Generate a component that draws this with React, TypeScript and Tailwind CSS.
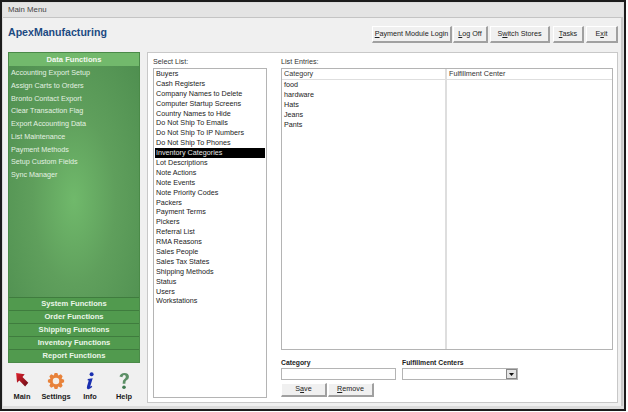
const items = ["Buyers","Cash Registers","Company Names to Delete","Computer Startup Screens","Country Names to Hide","Do Not Ship To Emails","Do Not Ship To IP Numbers","Do Not Ship To Phones","Inventory Categories","Lot Descriptions","Note Actions","Note Events","Note Priority Codes","Packers","Payment Terms","Pickers","Referral List","RMA Reasons","Sales People","Sales Tax States","Shipping Methods","Status","Users","Workstations"];
const data = ["Accounting Export Setup","Assign Carts to Orders","Bronto Contact Export","Clear Transaction Flag","Export Accounting Data","List Maintenance","Payment Methods","Setup Custom Fields","Sync Manager"];
const sections = ["System Functions","Order Functions","Shipping Functions","Inventory Functions","Report Functions"];
const entries = ["food","hardware","Hats","Jeans","Pants"];

function Btn({ pre, u, post, w }: { pre: string; u: string; post: string; w: string }) {
  return (
    <button className={`${w} flex items-center justify-center bg-[#f0f0f0] border-t border-l border-t-white border-l-white border-b-2 border-r-2 border-b-[#a0a0a0] border-r-[#a0a0a0] text-[7.2px] text-[#222] whitespace-nowrap`}>
      <span>{pre}<span className="underline">{u}</span>{post}</span>
    </button>
  );
}

function Tool({ label, children }: { label: string; children: React.ReactNode }) {
  return (
    <div className="w-[28px] flex flex-col items-center gap-[2px]">
      <svg width="18" height="18" viewBox="0 0 20 20">{children}</svg>
      <span className="text-[7.4px] font-bold text-[#1a1a1a] leading-[10px] whitespace-nowrap">{label}</span>
    </div>
  );
}

export default function App() {
  return (
    <div className="w-[628px] h-[412px] bg-white overflow-hidden transform-gpu" style={{ fontFamily: '"Liberation Sans", Arial, sans-serif' }}>
      <div className="w-[626px] h-[411px] border-2 border-[#1c1c1c] bg-[#dcdcdc] flex flex-col p-px">
        <div className="h-[15px] shrink-0 bg-[#e4e4e4] border-b border-[#c4c4c4] flex items-center pl-[5px] text-[7.8px] text-[#444]">Main Menu</div>
        <div className="flex-1 bg-[#f0f0f0] flex flex-col pl-[5px] pr-[3px] pt-[5px] mb-[2px] border-r-2 border-[#c8c8c8] min-h-0">
          <div className="flex justify-between items-start h-[29px] shrink-0">
            <div className="text-[10.6px] font-bold text-[#1c4a82] leading-[16px] pt-[1px]">ApexManufacturing</div>
            <div className="flex h-[17px] mt-[3px]">
              <Btn pre="" u="P" post="ayment Module Login" w="w-[80px]" />
              <Btn pre="" u="L" post="og Off" w="w-[35px] ml-[1px]" />
              <Btn pre="S" u="w" post="itch Stores" w="w-[60px] ml-[2px]" />
              <Btn pre="" u="T" post="asks" w="w-[31px] ml-[3px]" />
              <Btn pre="E" u="x" post="it" w="w-[32px] ml-[2px]" />
            </div>
          </div>
          <div className="flex gap-[7px] flex-1 min-h-0 pb-[3px]">
            <div className="w-[132px] flex flex-col">
              <div className="h-[311px] border border-[#4a8a48] flex flex-col bg-[#4f9a4c]">
                <div className="h-[13px] shrink-0 bg-[#72b96c] text-[#f2f8f0] text-[7.6px] font-bold flex items-center justify-center">Data Functions</div>
                <div className="flex-1 bg-[radial-gradient(ellipse_at_50%_58%,#70b96b_0%,#5f9f5c_45%,#4f8f50_100%)] pl-[2px] pt-[1px]">
                  {data.map((d) => <div key={d} className="h-[12.75px] text-[7.2px] leading-[12.75px] text-[#e3f1e2] whitespace-nowrap">{d}</div>)}
                </div>
                {sections.map((s) => (
                  <div key={s} className="h-[13px] shrink-0 border-t border-[#3f7c3e] bg-[#519a4e] text-[#eaf6e8] text-[7.6px] font-bold flex items-center justify-center">{s}</div>
                ))}
              </div>
              <div className="flex gap-[6px] pt-[9px]">
                <Tool label="Main">
                  <defs>
                    <linearGradient id="arrowFill" x1="0" y1="0" x2="1" y2="1">
                      <stop offset="0" stopColor="#e0202c" />
                      <stop offset="1" stopColor="#6a0f18" />
                    </linearGradient>
                  </defs>
                  <path d="M3.5 1 L13 2.5 L10.5 5.5 L17 12 L13.5 16 L7 9.5 L4.5 12 Z" fill="url(#arrowFill)" />
                </Tool>
                <Tool label="Settings">
                  <path d="M8.5 1 L11.5 1 L12.5 3.8 L15.4 2.6 L17.4 4.6 L16.2 7.5 L19 8.5 L19 11.5 L16.2 12.5 L17.4 15.4 L15.4 17.4 L12.5 16.2 L11.5 19 L8.5 19 L7.5 16.2 L4.6 17.4 L2.6 15.4 L3.8 12.5 L1 11.5 L1 8.5 L3.8 7.5 L2.6 4.6 L4.6 2.6 L7.5 3.8 Z" fill="#e8823a" />
                  <circle cx="10" cy="10" r="3.6" fill="#f4efe8" />
                </Tool>
                <Tool label="Info">
                  <circle cx="11.8" cy="2.6" r="2.2" fill="#1a2fb0" />
                  <path d="M7.5 7.8 L13 7 L10.4 15.5 Q10.2 17 12.2 15.3 L12.4 16.8 Q9.2 19.8 7.2 18.8 Q6 18.2 6.8 15.5 L8.6 9.5 L7.3 9.3 Z" fill="#1a2fb0" />
                </Tool>
                <Tool label="Help">
                  <path d="M5 5 Q6 1 10.5 1 Q15.5 1 15.5 5.5 Q15.5 8 12.5 9.5 Q11.5 10.2 11.5 13 L8.5 13 Q8.2 9 10.5 7.8 Q12 6.8 12 5.2 Q12 3.4 10.2 3.4 Q8.6 3.4 8.2 5.8 Z" fill="#5c8f66" />
                  <circle cx="10" cy="17" r="2" fill="#3f7a50" />
                </Tool>
              </div>
            </div>
            <div className="flex-1 bg-white border border-[#c8c8c8] flex pl-[5px] pr-[4px] pt-[3px] pb-[4px] gap-[14px]">
              <div className="w-[114px] flex flex-col">
                <div className="text-[7.2px] leading-[11px] text-[#333] h-[11px] mb-[1px] shrink-0">Select List:</div>
                <div className="flex-1 border border-[#b4b4b4] px-[1px]">
                  {items.map((it) => (
                    <div key={it} className={`h-[9.9px] leading-[9.9px] text-[7.2px] pl-[1px] whitespace-nowrap ${it === "Inventory Categories" ? "bg-black text-[#e8e8e8]" : "text-[#222]"}`}>{it}</div>
                  ))}
                </div>
              </div>
              <div className="flex-1 flex flex-col">
                <div className="text-[7.2px] leading-[11px] text-[#333] h-[11px] mb-[1px] shrink-0">List Entries:</div>
                <div className="h-[282px] shrink-0 border border-[#b4b4b4] flex">
                  <div className="w-[165px] border-r-2 border-[#dedede]">
                    <div className="h-[10px] leading-[10px] text-[7.2px] text-[#333] pl-[2px] border-b border-[#dedede] box-content">Category</div>
                    {entries.map((e) => <div key={e} className="h-[9.9px] leading-[9.9px] text-[7.2px] text-[#222] pl-[2px]">{e}</div>)}
                  </div>
                  <div className="flex-1">
                    <div className="h-[10px] leading-[10px] text-[7.2px] text-[#333] pl-[2px] border-b border-[#dedede] box-content">Fulfillment Center</div>
                  </div>
                </div>
                <div className="flex gap-[6px] mt-[7px]">
                  <div className="w-[115px]">
                    <div className="text-[6.8px] font-bold leading-[11px] text-[#222]">Category</div>
                    <div className="h-[12px] border border-[#b4b4b4] bg-white" />
                  </div>
                  <div className="w-[116px]">
                    <div className="text-[6.8px] font-bold leading-[11px] text-[#222]">Fulfillment Centers</div>
                    <div className="h-[12px] border border-[#b4b4b4] bg-white flex justify-end">
                      <div className="w-[11px] bg-[#e4e4e4] border border-[#888] flex items-center justify-center">
                        <svg width="5" height="3" viewBox="0 0 5 3"><path d="M0 0 H5 L2.5 3 Z" fill="#111" /></svg>
                      </div>
                    </div>
                  </div>
                </div>
                <div className="flex gap-[1px] mt-[3px] h-[14px]">
                  <Btn pre="S" u="a" post="ve" w="w-[46px]" />
                  <Btn pre="" u="R" post="emove" w="w-[46px]" />
                </div>
              </div>
            </div>
          </div>
        </div>
      </div>
    </div>
  );
}
